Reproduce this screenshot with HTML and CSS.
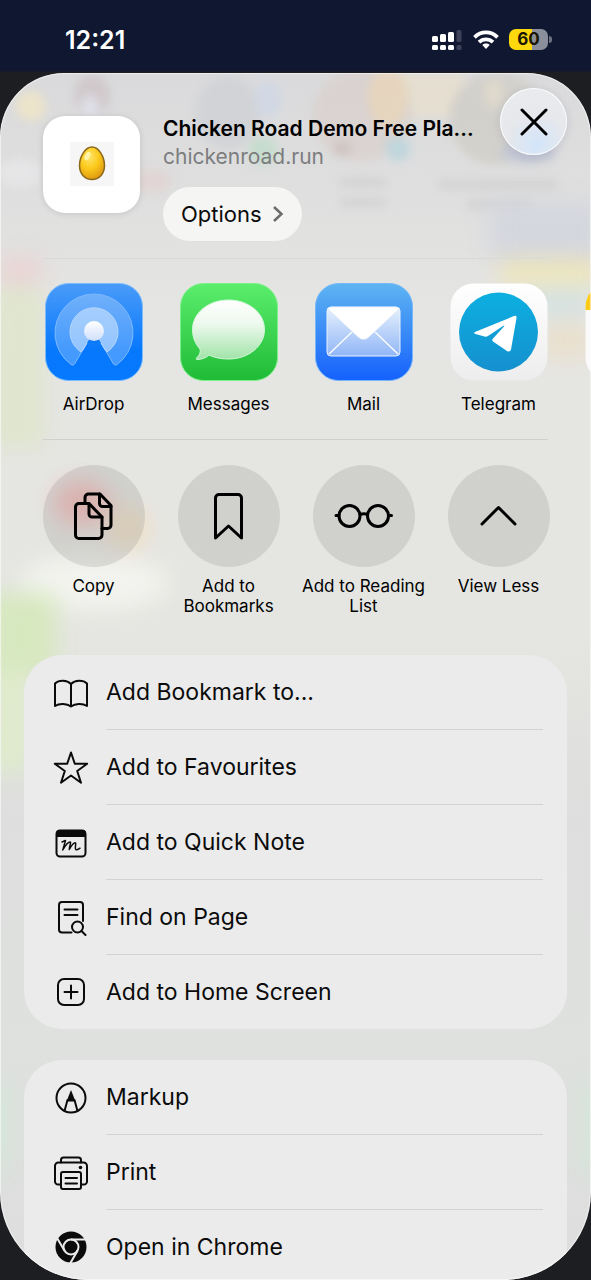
FILE: index.html
```
<!DOCTYPE html>
<html lang="en-GB">

<head>
    <meta charset="UTF-8">
    <meta name="viewport" content="width=device-width, initial-scale=1.0">
    <title>Share</title>
    <link rel="stylesheet" href="styles.css">
</head>

<body>
    <!-- Status bar -->
    <header class="status-bar">
        <time class="clock">12:21</time>
        <div class="status-icons">
            <svg class="signal" width="31" height="22" viewBox="0 0 31 22" aria-hidden="true">
                <g fill="#fff">
                    <rect x="0" y="7" width="6" height="6" rx="1.5" />
                    <rect x="8" y="5" width="6" height="8" rx="1.5" />
                    <rect x="16" y="3" width="6" height="10" rx="1.5" />
                    <rect x="0" y="16" width="6" height="5" rx="1.5" />
                    <rect x="8" y="16" width="6" height="5" rx="1.5" />
                    <rect x="16" y="16" width="6" height="5" rx="1.5" />
                </g>
                <g fill="#3d4259">
                    <rect x="24.5" y="1" width="5" height="12" rx="1.5" />
                    <rect x="24.5" y="16" width="5" height="5" rx="1.5" />
                </g>
            </svg>
            <svg class="wifi" width="26" height="20" viewBox="0 0 26 20" aria-hidden="true">
                <g fill="none" stroke="#fff" stroke-width="3.8">
                    <path d="M1.5 7.3C8 .8 18 .8 24.5 7.3" />
                    <path d="M6 12.2C10 8.3 16 8.3 20 12.2" />
                </g>
                <path fill="#fff" d="M9.3 14.9C11.3 13 14.7 13 16.7 14.9L13 19Z" />
            </svg>
            <div class="battery"><span class="battery-level">60</span></div>
        </div>
    </header>

    <main class="sheet">
        <!-- Page showing through the glass -->
        <svg class="backdrop" viewBox="0 0 591 1207" preserveAspectRatio="none" aria-hidden="true">
            <g class="soft">
                <ellipse cx="31" cy="33" rx="15" ry="15" fill="#f2e6c4" />
                <ellipse cx="92" cy="22" rx="18" ry="20" fill="#cdc3c6" />
                <ellipse cx="90" cy="34" rx="9" ry="12" fill="#dfe0ea" />
                <ellipse cx="228" cy="40" rx="32" ry="36" fill="#ced0d4" />
                <ellipse cx="268" cy="26" rx="14" ry="18" fill="#ced7e6" />
                <ellipse cx="263" cy="78" rx="15" ry="14" fill="#bfdcc8" />
                <rect x="385" y="0" width="80" height="44" fill="#e9e0cd" />
                <ellipse cx="362" cy="42" rx="50" ry="46" fill="#d9d0cd" />
                <ellipse cx="388" cy="24" rx="20" ry="30" fill="#ead3b4" />
                <ellipse cx="342" cy="76" rx="10" ry="8" fill="#cbbdb9" />
                <ellipse cx="398" cy="76" rx="12" ry="12" fill="#b5d4dc" />
                <ellipse cx="497" cy="46" rx="48" ry="46" fill="#cfcdc5" />
                <ellipse cx="494" cy="20" rx="9" ry="14" fill="#e2dac8" />
                <ellipse cx="528" cy="80" rx="28" ry="11" fill="#bdc2d2" />
                <rect x="340" y="105" width="46" height="9" fill="#cfcfd0" />
                <rect x="340" y="125" width="46" height="9" fill="#cfcfd0" />
                <rect x="438" y="107" width="118" height="9" fill="#cfcfd0" />
                <rect x="465" y="127" width="66" height="9" fill="#cfcfd0" />
                <ellipse cx="20" cy="100" rx="22" ry="14" fill="#e8e8ea" />
                <ellipse cx="152" cy="108" rx="20" ry="12" fill="#e2d2d2" />
            </g>
            <g class="softer">
                <rect x="490" y="130" width="110" height="56" fill="#d2d5dd" />
                <rect x="500" y="187" width="100" height="24" fill="#f2e7b4" />
                <rect x="530" y="214" width="60" height="30" fill="#d4e2e1" />
                <rect x="545" y="250" width="44" height="36" fill="#ebdfc9" />
                <ellipse cx="20" cy="198" rx="24" ry="14" fill="#ebd0d1" />
                <rect x="-10" y="215" width="55" height="160" fill="#dfe6cc" />
                <ellipse cx="94" cy="510" rx="74" ry="28" fill="#f4f5f0" />
                <ellipse cx="82" cy="430" rx="28" ry="22" fill="#f5b5b3" />
                <ellipse cx="128" cy="455" rx="20" ry="22" fill="#f2dfc0" />
                <rect x="-10" y="520" width="66" height="80" fill="#d5e9bb" />
                <rect x="-10" y="600" width="40" height="100" fill="#dfecca" />
                <rect x="-4" y="1010" width="8" height="90" fill="#c5f2d4" />
                <rect x="587" y="1010" width="8" height="90" fill="#c5f2d4" />
            </g>
        </svg>

        <!-- Shared page -->
        <section class="page-info">
            <svg class="thumb" width="97" height="97" viewBox="0 0 97 97" aria-hidden="true">
                <defs>
                    <radialGradient id="egg" cx="0.4" cy="0.3" r="0.75">
                        <stop offset="0" stop-color="#ffe56a" />
                        <stop offset="0.5" stop-color="#fbc91b" />
                        <stop offset="1" stop-color="#dc9412" />
                    </radialGradient>
                </defs>
                <rect x="27" y="26" width="44" height="44" fill="#f6f6f6" />
                <path d="M49 31C56 31 61.5 41 61.5 49.5C61.5 58 56 63.5 49 63.5C42 63.5 36.5 58 36.5 49.5C36.5 41 42 31 49 31Z" fill="url(#egg)" stroke="#8b681c" stroke-width="1.5" />
                <ellipse cx="44.5" cy="40" rx="2.5" ry="4.5" fill="#fff3a6" transform="rotate(28 44.5 40)" />
            </svg>
            <div class="page-text">
                <h1 class="page-title">Chicken Road Demo Free Pla...</h1>
                <p class="page-url">chickenroad.run</p>
                <button class="options" type="button">
                    Options
                    <svg width="12" height="18" viewBox="0 0 12 18" aria-hidden="true">
                        <path d="M2 2L9.5 9L2 16" fill="none" stroke="#6b6b6b" stroke-width="2.5" />
                    </svg>
                </button>
            </div>
            <button class="close" type="button" aria-label="Close">
                <svg width="28" height="28" viewBox="0 0 28 28" aria-hidden="true">
                    <path d="M2 2L26 26M26 2L2 26" stroke="#000" stroke-width="3" stroke-linecap="round" />
                </svg>
            </button>
        </section>

        <!-- Apps -->
        <section class="tiles apps">
            <button class="tile" type="button">
                <svg class="app-icon" width="98" height="98" viewBox="0 0 98 98" aria-hidden="true">
                    <defs>
                        <linearGradient id="airdrop-bg" x1="0" y1="0" x2="0" y2="1">
                            <stop offset="0" stop-color="#4a9bf8" />
                            <stop offset="0.7" stop-color="#0678fd" />
                            <stop offset="1" stop-color="#0579ff" />
                        </linearGradient>
                        <linearGradient id="airdrop-dot" x1="0" y1="0" x2="0" y2="1">
                            <stop offset="0" stop-color="#fff" />
                            <stop offset="1" stop-color="#cfdffb" />
                        </linearGradient>
                    </defs>
                    <rect x="0.5" y="0.5" width="97" height="97" rx="23" fill="url(#airdrop-bg)" stroke="#7dbcfb" />
                    <path d="M49 48L29.5 81Q28 83 26 81.5A39 39 0 1 1 72 81.5Q70 83 68.5 81Z" fill="#fff" fill-opacity="0.25" stroke="#7db9ff" />
                    <path d="M49 48L37.5 67.5Q36 70 34 67.5A24 24 0 1 1 64 67.5Q62 70 60.5 67.5Z" fill="#fff" fill-opacity="0.42" stroke="#b4d6ff" />
                    <path d="M49 48L42 60H56Z" fill="#0c79fb" />
                    <circle cx="49" cy="48" r="10" fill="url(#airdrop-dot)" />
                </svg>
                <span class="tile-label">AirDrop</span>
            </button>
            <button class="tile" type="button">
                <svg class="app-icon" width="98" height="98" viewBox="0 0 98 98" aria-hidden="true">
                    <defs>
                        <linearGradient id="messages-bg" x1="0" y1="0" x2="0" y2="1">
                            <stop offset="0" stop-color="#5bee6d" />
                            <stop offset="1" stop-color="#20bb36" />
                        </linearGradient>
                        <linearGradient id="bubble" x1="0" y1="0" x2="0" y2="1">
                            <stop offset="0" stop-color="#fff" />
                            <stop offset="0.4" stop-color="#edf9ee" />
                            <stop offset="1" stop-color="#a0e3a7" />
                        </linearGradient>
                    </defs>
                    <rect x="0.5" y="0.5" width="97" height="97" rx="23" fill="url(#messages-bg)" stroke="#7cf08b" />
                    <path d="M48.5 17C68.5 17 84.5 30 84.5 46.5C84.5 63 68.5 76 48.5 76C41 76 34 74.5 29 72C26 75 21 76.5 17 76.5C16 76.5 16 75.5 17 74.5C20 71.5 20.8 69 20 66C15 60.5 12.5 54 12.5 46.5C12.5 30 28.5 17 48.5 17Z" fill="url(#bubble)" stroke="#d3f7d8" />
                </svg>
                <span class="tile-label">Messages</span>
            </button>
            <button class="tile" type="button">
                <svg class="app-icon" width="98" height="98" viewBox="0 0 98 98" aria-hidden="true">
                    <defs>
                        <linearGradient id="mail-bg" x1="0" y1="0" x2="0" y2="1">
                            <stop offset="0" stop-color="#5fb5f1" />
                            <stop offset="1" stop-color="#1561fd" />
                        </linearGradient>
                        <linearGradient id="envelope" x1="0" y1="0" x2="0" y2="1">
                            <stop offset="0" stop-color="#e6f1fc" />
                            <stop offset="1" stop-color="#91b6f7" />
                        </linearGradient>
                    </defs>
                    <rect x="0.5" y="0.5" width="97" height="97" rx="23" fill="url(#mail-bg)" stroke="#74b8f8" />
                    <rect x="12" y="24" width="73" height="49" rx="4" fill="url(#envelope)" stroke="#e8f2ff" />
                    <path d="M14 71L37 49M83 71L60 49" stroke="#fff" stroke-width="1.3" />
                    <path d="M13 26L43 54Q48.5 59 54 54L84 26Q83 24 80 24H17Q14 24 13 26Z" fill="#fff" stroke="#d5e2f7" stroke-width="0.5" />
                </svg>
                <span class="tile-label">Mail</span>
            </button>
            <button class="tile" type="button">
                <svg class="app-icon" width="98" height="98" viewBox="0 0 98 98" aria-hidden="true">
                    <defs>
                        <linearGradient id="tile-white" x1="0" y1="0" x2="0" y2="1">
                            <stop offset="0" stop-color="#fff" />
                            <stop offset="1" stop-color="#ededee" />
                        </linearGradient>
                        <linearGradient id="telegram" x1="0" y1="0" x2="0" y2="1">
                            <stop offset="0" stop-color="#0cafe0" />
                            <stop offset="1" stop-color="#1590cf" />
                        </linearGradient>
                    </defs>
                    <rect x="0.5" y="0.5" width="97" height="97" rx="23" fill="url(#tile-white)" />
                    <circle cx="48.5" cy="49" r="39.5" fill="url(#telegram)" />
                    <path d="M25 49L64 33Q67 32 66.5 35L61 66.5Q60 69.5 57 68L43 58.5Q41.5 57 43 55.5L54 43.5Q55 42 53 43L38 53Q36.5 54 34.5 53.5L25.5 51Q23 50 25 49Z" fill="#fff" />
                </svg>
                <span class="tile-label">Telegram</span>
            </button>
            <button class="tile" type="button" aria-label="Notes">
                <svg class="app-icon" width="98" height="98" viewBox="0 0 98 98" aria-hidden="true">
                    <rect x="0.5" y="0.5" width="97" height="97" rx="23" fill="#fafafa" />
                    <path d="M0.500 27V24A23 23 0 0 1 24 0.500H74A23 23 0 0 1 97.500 24V27Z" fill="#fccb18" />
                </svg>
            </button>
        </section>

        <!-- Quick actions -->
        <section class="tiles actions">
            <button class="tile" type="button">
                <span class="circle">
                    <svg width="60" height="60" viewBox="0 0 60 60" aria-hidden="true">
                        <path d="M15 17.5H25L38 31V49A3.5 3.5 0 0 1 34.5 52.5H15A3.5 3.5 0 0 1 11.5 49V21A3.5 3.5 0 0 1 15 17.5Z" />
                        <path d="M25 17.5V28A3 3 0 0 0 28 31H38" />
                        <path d="M21 17V11.5A3.5 3.5 0 0 1 24.5 8H36L47 19.5V39A3.5 3.5 0 0 1 43.5 42.5H38" />
                        <path d="M35.5 8V17.5A3 3 0 0 0 38.5 20.5H47" />
                    </svg>
                </span>
                <span class="tile-label">Copy</span>
            </button>
            <button class="tile" type="button">
                <span class="circle">
                    <svg width="60" height="60" viewBox="0 0 60 60" aria-hidden="true">
                        <path d="M16.5 52V12A3.5 3.5 0 0 1 20 8.5H39A3.5 3.5 0 0 1 42.5 12V52L29.5 40Z" />
                    </svg>
                </span>
                <span class="tile-label">Add to Bookmarks</span>
            </button>
            <button class="tile" type="button">
                <span class="circle">
                    <svg width="60" height="60" viewBox="0 0 60 60" aria-hidden="true">
                        <circle cx="15.5" cy="30" r="10.5" />
                        <circle cx="44" cy="30" r="10.5" />
                        <path d="M26 28.500Q30 27 33.500 28.500M5 29.500H2M54.500 29.500H57.500" />
                    </svg>
                </span>
                <span class="tile-label">Add to Reading List</span>
            </button>
            <button class="tile" type="button">
                <span class="circle">
                    <svg width="60" height="60" viewBox="0 0 60 60" aria-hidden="true">
                        <path d="M13 38L29.5 21.5L46 38" />
                    </svg>
                </span>
                <span class="tile-label">View Less</span>
            </button>
        </section>

        <!-- Action lists -->
        <ul class="card">
            <li>
                <button class="row" type="button">
                    <svg width="36" height="36" viewBox="0 0 36 36" aria-hidden="true">
                        <path d="M18 9C14 5 6 4.8 2 8.5V31C6.5 28 14 28.5 18 31.5C22 28.5 29.5 28 34 31V8.5C30 4.8 22 5 18 9V31" />
                    </svg>
                    <span class="row-label">Add Bookmark to...</span>
                </button>
            </li>
            <li>
                <button class="row" type="button">
                    <svg width="36" height="36" viewBox="0 0 36 36" aria-hidden="true">
                        <path d="M18 2.5L21.8 13.7L34.2 13.7L24.2 21L28 32.7L18 25.5L8 32.7L11.8 21L1.8 13.7L14.2 13.7Z" />
                    </svg>
                    <span class="row-label">Add to Favourites</span>
                </button>
            </li>
            <li>
                <button class="row" type="button">
                    <svg width="36" height="36" viewBox="0 0 36 36" aria-hidden="true">
                        <rect x="3.5" y="5.5" width="29" height="26" rx="3.5" />
                        <path class="solid" d="M3 12V8Q3 5 6.5 5H29.5Q33 5 33 8V12Z" />
                        <path class="thin" d="M9 17L12.5 15.5L9.8 25C12 21 15.500 17 17.200 17C18.500 17 15.800 23 16.300 24.500C18.200 21 21 17.800 22.300 17.800C23.500 17.800 21.500 23.500 22.800 24.500C24.300 25 26 24 27 23.200" />
                    </svg>
                    <span class="row-label">Add to Quick Note</span>
                </button>
            </li>
            <li>
                <button class="row" type="button">
                    <svg width="36" height="36" viewBox="0 0 36 36" aria-hidden="true">
                        <path d="M18.5 32.5H9A3 3 0 0 1 6 29.5V5A3 3 0 0 1 9 2H27A3 3 0 0 1 30 5V21M11.5 9.5H24.5M11.5 15H24.5" />
                        <circle cx="24.5" cy="27" r="5.5" />
                        <path d="M28.5 31L32.5 35" />
                    </svg>
                    <span class="row-label">Find on Page</span>
                </button>
            </li>
            <li>
                <button class="row" type="button">
                    <svg width="36" height="36" viewBox="0 0 36 36" aria-hidden="true">
                        <rect x="5" y="5" width="26" height="26" rx="6" />
                        <path d="M18 11.5V24.5M11.5 18H24.5" />
                    </svg>
                    <span class="row-label">Add to Home Screen</span>
                </button>
            </li>
        </ul>

        <ul class="card">
            <li>
                <button class="row" type="button">
                    <svg width="36" height="36" viewBox="0 0 36 36" aria-hidden="true">
                        <circle cx="18" cy="18" r="14.5" />
                        <path d="M11.5 31L14.5 20M24.5 31L21.5 20" />
                        <path class="solid" d="M18 10L22.5 21.5H13.5Z" />
                    </svg>
                    <span class="row-label">Markup</span>
                </button>
            </li>
            <li>
                <button class="row" type="button">
                    <svg width="36" height="36" viewBox="0 0 36 36" aria-hidden="true">
                        <path d="M8 29.5H5A3 3 0 0 1 2 26.5V11A3.5 3.5 0 0 1 5.5 7.5H30.5A3.5 3.5 0 0 1 34 11V26.5A3 3 0 0 1 31 29.5H28" />
                        <path d="M8 7.5V5A2.5 2.5 0 0 1 10.5 2.5H25.5A2.5 2.5 0 0 1 28 5V7.5" />
                        <rect x="8" y="17" width="20" height="17" rx="2" />
                        <path d="M12.5 23H24M12.5 28.5H24" />
                        <circle class="solid" cx="27.5" cy="12.5" r="1.8" />
                    </svg>
                    <span class="row-label">Print</span>
                </button>
            </li>
            <li>
                <button class="row" type="button">
                    <svg width="36" height="36" viewBox="0 0 36 36" aria-hidden="true">
                        <circle class="solid" cx="18" cy="18" r="15.5" />
                        <g class="cut">
                            <circle cx="18" cy="18" r="7.5" />
                            <path d="M18 10.5H34" />
                            <path d="M18 10.5H34" transform="rotate(120 18 18)" />
                            <path d="M18 10.5H34" transform="rotate(240 18 18)" />
                        </g>
                    </svg>
                    <span class="row-label">Open in Chrome</span>
                </button>
            </li>
        </ul>
    </main>
</body>

</html>
```

FILE: styles.css
```
/* General */
* {
    box-sizing: border-box;
}

body {
    margin: 0;
    height: 100vh;
    display: flex;
    flex-direction: column;
    overflow: hidden;
    font-family: Inter, "Liberation Sans", sans-serif;
    color: #0b0b0b;
    background: linear-gradient(#101731 71px, #1d1e22 72px);
}

button {
    font: inherit;
    color: inherit;
    background: none;
    border: 0;
    padding: 0;
    cursor: pointer;
}

svg {
    display: block;
    flex: none;
}

/* Status bar */
.status-bar {
    flex: none;
    height: 73px;
    padding: 6px 42px 0 65px;
    display: flex;
    justify-content: space-between;
    align-items: center;
    color: #fff;
}

.clock {
    font-size: 25px;
    font-weight: 600;
}

.status-icons {
    display: flex;
    align-items: center;
    gap: 10px;
}

.battery {
    position: relative;
    width: 39px;
    height: 21px;
    margin-right: 1px;
    border-radius: 7px;
    background: linear-gradient(90deg, #fcd80c 60%, #8b8f9b 60%);
}

.battery::after {
    content: "";
    position: absolute;
    right: -4px;
    top: 7px;
    width: 3px;
    height: 7px;
    border-radius: 0 3px 3px 0;
    background-color: #6f7382;
}

.battery-level {
    display: block;
    text-align: center;
    font-size: 17px;
    font-weight: 700;
    line-height: 21px;
    color: #1a1602;
}

/* Share sheet */
.sheet {
    position: relative;
    flex: 1;
    min-height: 0;
    overflow: hidden;
    border-radius: 64px 64px 88px 88px;
    background: linear-gradient(#dadadc, #dfdfdf 10%, #e5e5e3 20%, #e5e5e1 47%, #dddedd 62%, #dfe1df 80%, #dddddd);
    isolation: isolate;
}

.sheet::after {
    content: "";
    position: absolute;
    inset: 0;
    border-radius: inherit;
    box-shadow: inset 0 0 1px 1px rgba(255, 255, 255, 0.6);
    pointer-events: none;
}

.backdrop {
    position: absolute;
    inset: 0;
    width: 100%;
    height: 100%;
    z-index: -1;
}

.soft {
    filter: blur(5px);
    opacity: 0.75;
}

.softer {
    filter: blur(11px);
    opacity: 0.9;
}

/* Shared page */
.page-info {
    display: flex;
    align-items: flex-start;
    padding: 15px 24px 17px 43px;
}

.thumb {
    margin-top: 28px;
    border-radius: 22px;
    background-color: #fff;
    box-shadow: 0 1px 6px rgba(0, 0, 0, 0.12);
}

.page-text {
    flex: 1;
    min-width: 0;
    margin: 27px 20px 0 23px;
}

.page-title,
.page-url {
    margin: 0;
    font-size: 21px;
    line-height: 28px;
    white-space: nowrap;
}

.page-title {
    font-weight: 600;
    color: #000;
}

.page-url {
    color: #7c7d7e;
}

.options {
    display: flex;
    align-items: center;
    gap: 10px;
    height: 54px;
    margin-top: 16px;
    padding: 0 18px;
    border-radius: 27px;
    font-size: 22px;
    background-color: rgba(250, 250, 248, 0.8);
}

.close {
    display: grid;
    place-items: center;
    width: 67px;
    height: 67px;
    border-radius: 50%;
    background: radial-gradient(circle at 55% 85%, #d3e5fa, #e6e8ec 45%, #ececee);
    box-shadow: inset 0 0 0 1px #fafafa, 0 2px 8px rgba(60, 70, 120, 0.15);
}

/* Apps and quick actions */
.tiles {
    display: flex;
    padding: 25px 0 25px 26px;
    overflow: hidden;
    background: linear-gradient(#d0d0ce, #d0d0ce) top / calc(100% - 86px) 1px no-repeat;
}

.apps {
    background-image: linear-gradient(#d9d9d8, #d9d9d8);
}

.tile {
    flex: 0 0 135px;
    display: flex;
    flex-direction: column;
    align-items: center;
    color: #000;
}

.tile-label {
    font-size: 17px;
    line-height: 20px;
    text-align: center;
}

.apps .tile-label {
    margin-top: 13px;
}

.actions {
    padding-top: 26px;
    padding-bottom: 39px;
}

.actions .tile-label {
    margin-top: 9px;
}

.circle {
    display: grid;
    place-items: center;
    width: 102px;
    height: 102px;
    border-radius: 50%;
    background-color: rgba(150, 150, 145, 0.26);
}

.circle svg {
    fill: none;
    stroke: #000;
    stroke-width: 3;
    stroke-linecap: round;
    stroke-linejoin: round;
}

/* Action lists */
.card {
    list-style: none;
    margin: 0 24px 31px;
    padding: 0;
    border-radius: 38px;
    background-color: #ebebeb;
}

.row {
    display: flex;
    align-items: center;
    gap: 17px;
    width: 100%;
    padding: 0 24px 0 29px;
    text-align: left;
}

.row svg {
    fill: none;
    stroke: #0b0b0b;
    stroke-width: 2;
    stroke-linecap: round;
    stroke-linejoin: round;
}

.row .solid {
    fill: #0b0b0b;
    stroke: none;
}

.row .thin {
    stroke-width: 1.5;
}

.row .cut {
    stroke: #ebebeb;
    stroke-linecap: butt;
}

.row-label {
    flex: 1;
    font-size: 23px;
    line-height: 74px;
    border-bottom: 1px solid #d2d2d2;
}

.card li:last-child .row-label {
    border-bottom: 0;
}
```
